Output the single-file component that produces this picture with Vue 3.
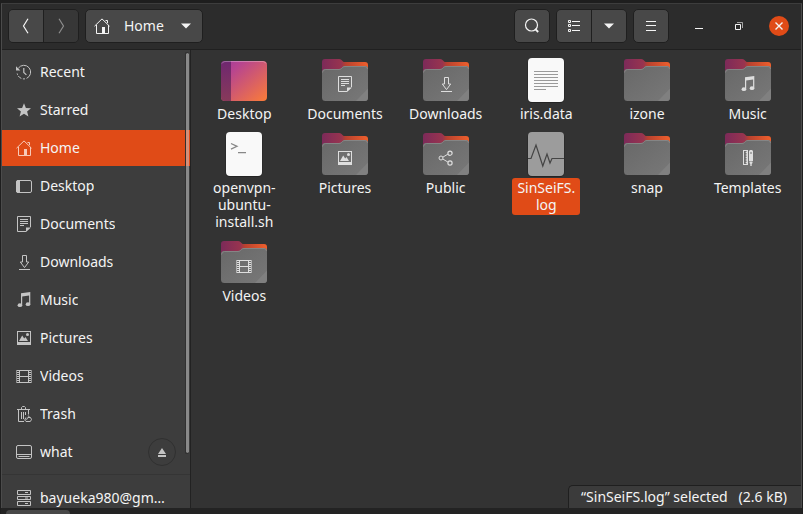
<script setup>
import { ref } from 'vue'

const places = [
  { name: 'Recent', icon: 'recent' },
  { name: 'Starred', icon: 'star' },
  { name: 'Home', icon: 'home' },
  { name: 'Desktop', icon: 'desktop' },
  { name: 'Documents', icon: 'document' },
  { name: 'Downloads', icon: 'download' },
  { name: 'Music', icon: 'music' },
  { name: 'Pictures', icon: 'picture' },
  { name: 'Videos', icon: 'video' },
  { name: 'Trash', icon: 'trash' },
  { name: 'what', icon: 'drive', ejectable: true },
]
const mounts = [{ name: 'bayueka980@gm…', icon: 'server' }]

// A zero-width space marks where a long name may break.
const files = [
  { name: 'Desktop', kind: 'desktop' },
  { name: 'Documents', kind: 'folder', icon: 'document' },
  { name: 'Downloads', kind: 'folder', icon: 'download' },
  { name: 'iris.data', kind: 'text' },
  { name: 'izone', kind: 'folder' },
  { name: 'Music', kind: 'folder', icon: 'music' },
  { name: 'openvpn-ubuntu-install.sh', kind: 'script' },
  { name: 'Pictures', kind: 'folder', icon: 'picture' },
  { name: 'Public', kind: 'folder', icon: 'share' },
  { name: 'SinSeiFS.\u200blog', kind: 'log' },
  { name: 'snap', kind: 'folder' },
  { name: 'Templates', kind: 'folder', icon: 'template' },
  { name: 'Videos', kind: 'folder', icon: 'video' },
]

const place = ref('Home')
const selected = ref('SinSeiFS.\u200blog')
</script>

<template>
  <div class="screen">
    <svg class="defs" width="0" height="0" aria-hidden="true">
      <defs>
        <linearGradient id="back" x1="0" y1="0" x2="1" y2="0">
          <stop offset="0" stop-color="#7c2a59" /><stop offset=".42" stop-color="#98344f" />
          <stop offset=".52" stop-color="#b8412f" /><stop offset="1" stop-color="#f0602c" />
        </linearGradient>
        <linearGradient id="front" x1="0" y1="0" x2="1" y2="1">
          <stop offset="0" stop-color="#686868" /><stop offset="1" stop-color="#787878" />
        </linearGradient>
        <linearGradient id="wall" x1="0" y1="0" x2="1" y2="1">
          <stop offset="0" stop-color="#a23a9c" /><stop offset=".25" stop-color="#b8458f" />
          <stop offset="1" stop-color="#fb7c38" />
        </linearGradient>
        <linearGradient id="dock" x1="0" y1="0" x2="0" y2="1">
          <stop offset="0" stop-color="#6f2770" /><stop offset="1" stop-color="#873a5a" />
        </linearGradient>
      </defs>
      <symbol id="recent" viewBox="0 0 16 16">
        <path d="M2.300 4.200A6.800 6.800 0 1 1 1.200 9.500" fill="none" stroke="currentColor" stroke-dasharray="25 1.600 2 1.600 4 1" />
        <path d="M0 2.200v4.300h4.300zM7.200 4h1.200v4.300l2.400 2.200-.8.8-2.800-2.600z" fill="currentColor" />
      </symbol>
      <symbol id="star" viewBox="0 0 16 16">
        <path d="M8 1.200l1.900 4.700 5.100.3-3.900 3.300 1.300 5L8 11.800l-4.400 2.700 1.300-5L1 6.200l5.100-.3z" fill="currentColor" />
      </symbol>
      <symbol id="home" viewBox="0 0 16 16">
        <path d="M.5 8.200L8 .9l7.500 7.300M2.500 7v8.500h12V7M11.500 2.500h2v2.600" fill="none" stroke="currentColor" />
        <path d="M8 9h3v6.500H8z" fill="currentColor" />
      </symbol>
      <symbol id="desktop" viewBox="0 0 16 16">
        <rect x=".5" y="2.500" width="15" height="12" rx="1.500" fill="none" stroke="currentColor" />
        <path d="M1.500 2H4v13H1.500L0 13.500v-10z" fill="currentColor" />
      </symbol>
      <symbol id="document" viewBox="0 0 16 16">
        <path d="M10 15.500H1.500V.5h13V11" fill="none" stroke="currentColor" />
        <path d="M10 16v-4.500h5zM4 3h8v1H4zM4 5h8v1H4zM4 7h8v1H4zM4 9h4v1H4z" fill="currentColor" />
      </symbol>
      <symbol id="download" viewBox="0 0 16 16">
        <path d="M6.500 1.500h4V8h2.200L8.500 13.600 4.300 8h2.200zM3 15.500h11" fill="none" stroke="currentColor" />
      </symbol>
      <symbol id="music" viewBox="0 0 16 16">
        <path d="M5 1.200L14.300 0v12.300h-1.200V3.600L6.200 4.400v9H5z" fill="currentColor" />
        <ellipse cx="3.900" cy="13.200" rx="2.300" ry="1.900" fill="currentColor" />
        <ellipse cx="12" cy="12.200" rx="2.300" ry="1.900" fill="currentColor" />
      </symbol>
      <symbol id="picture" viewBox="0 0 16 16">
        <path d="M1 1h14v14H1zM2 2v10h12V2z" fill="currentColor" fill-rule="evenodd" />
        <path d="M3 11l3.200-5.500 2 3 1.300-1.500L12 11z" fill="currentColor" />
        <circle cx="11.500" cy="4.500" r="1.500" fill="currentColor" />
      </symbol>
      <symbol id="video" viewBox="0 0 16 16">
        <path d="M4 2.500h8M4 8.500h8M4 14.500h8M3.500 2v13M12.500 2v13" fill="none" stroke="currentColor" />
        <path d="M2 2v13M14 2v13" fill="none" stroke="currentColor" stroke-width="2" stroke-dasharray="1 1" />
        <path d="M.5 2v13M15.500 2v13" fill="none" stroke="currentColor" stroke-opacity=".6" />
      </symbol>
      <symbol id="trash" viewBox="0 0 16 16">
        <path d="M1 3.500h13M5.500 3V1.500l1-1h2l1 1V3M2.500 4v11.500H8M12.500 4v4.500M5.500 6v7M7.500 6v7M9.500 6v3" fill="none" stroke="currentColor" />
        <path d="M12.300 9.500l1.200 2M9.800 11.500L8.800 14l1.200 1.500h4.300l1.200-2-1-2h-2.700l-1.300 2.300" fill="none" stroke="currentColor" />
      </symbol>
      <symbol id="drive" viewBox="0 0 16 16">
        <rect x=".5" y="1.500" width="15" height="13" rx="1.500" fill="none" stroke="currentColor" />
        <path d="M1 10.500h14M2.500 12.500h11" fill="none" stroke="currentColor" />
      </symbol>
      <symbol id="server" viewBox="0 0 16 16">
        <path d="M1.500.5h13v4h-13zM1.500 6.500h13v3h-13zM1.500 11.500h13v4h-13zM9 2.500h3M9 8h3M9 13.500h3" fill="none" stroke="currentColor" />
      </symbol>
      <symbol id="share" viewBox="0 0 16 16">
        <path d="M4.800 7.200l5-3M4.800 9l5 3" fill="none" stroke="currentColor" />
        <circle cx="3" cy="8" r="2" fill="none" stroke="currentColor" />
        <circle cx="12" cy="3.200" r="2.100" fill="none" stroke="currentColor" stroke-width="1.200" />
        <circle cx="12" cy="13" r="2.100" fill="none" stroke="currentColor" stroke-width="1.200" />
      </symbol>
      <symbol id="template" viewBox="0 0 16 16">
        <path d="M3 0h5v15H3zM4 1v13h2.500v-1H5.700v-1h.8v-1.500H5.700v-1h.8V8H5.700V7h.8V5.500H5.700v-1h.8V3H5.700V2h.8V1z" fill="currentColor" fill-rule="evenodd" />
        <path d="M9 1l1-1h2l1 1v10H9zM10.500 2v2h1V2zM9.500 11.500h3V13l-.8 1v2h-1.400v-2l-.8-1z" fill="currentColor" fill-rule="evenodd" />
      </symbol>
    </svg>

    <main class="window">
      <header class="header">
        <div class="group">
          <button class="btn" aria-label="Back">
            <svg width="16" height="16" viewBox="0 0 16 16"><path d="M10 .8L5.500 8l4.500 7.200" fill="none" stroke="currentColor" stroke-width="1.200" /></svg>
          </button>
          <button class="btn off" aria-label="Forward" disabled>
            <svg width="16" height="16" viewBox="0 0 16 16"><path d="M6 .8L10.500 8 6 15.200" fill="none" stroke="currentColor" stroke-width="1.200" /></svg>
          </button>
        </div>
        <button class="btn single path">
          <svg width="16" height="16"><use href="#home" /></svg>
          <span class="path-name">Home</span>
          <svg width="10" height="6" viewBox="0 0 10 6"><path d="M0 .5h10L5 5.500z" fill="currentColor" /></svg>
        </button>
        <span class="spring"></span>
        <button class="btn single" aria-label="Search">
          <svg width="16" height="16" viewBox="0 0 16 16">
            <circle cx="7.500" cy="7" r="6" fill="none" stroke="currentColor" stroke-width="1.200" />
            <path d="M11.200 11l3 3" stroke="currentColor" stroke-width="1.800" />
          </svg>
        </button>
        <div class="group">
          <button class="btn" aria-label="List view">
            <svg width="12" height="12" viewBox="0 0 12 12">
              <path d="M4 1.500h8M4 5.500h8M4 10.500h8" stroke="currentColor" />
              <path d="M.5.500h2v2h-2zM.5 4.500h2v2h-2zM.5 9.500h2v2h-2z" fill="none" stroke="currentColor" />
            </svg>
          </button>
          <button class="btn" aria-label="View options">
            <svg width="10" height="6" viewBox="0 0 10 6"><path d="M0 .5h10L5 5.500z" fill="currentColor" /></svg>
          </button>
        </div>
        <button class="btn single" aria-label="Menu">
          <svg width="10" height="10" viewBox="0 0 10 10"><path d="M0 .5h10M0 4.500h10M0 9.500h10" stroke="currentColor" /></svg>
        </button>
        <div class="controls">
          <button class="ctl" aria-label="Minimize">
            <svg width="8" height="8" viewBox="0 0 8 8"><path d="M0 6.500h8" stroke="currentColor" /></svg>
          </button>
          <button class="ctl" aria-label="Restore">
            <svg width="8" height="8" viewBox="0 0 8 8">
              <path d="M.5 2.500h5v5h-5z" fill="none" stroke="currentColor" />
              <path d="M2 .5h5.500V6" fill="none" stroke="currentColor" stroke-opacity=".6" />
            </svg>
          </button>
          <button class="ctl close" aria-label="Close">
            <svg width="8" height="8" viewBox="0 0 8 8"><path d="M.5.500l7 7M7.500.5l-7 7" stroke="currentColor" stroke-width="1.400" /></svg>
          </button>
        </div>
      </header>

      <div class="body">
        <aside class="sidebar">
          <nav class="list">
            <div v-for="p in places" :key="p.name" class="row" :class="{ active: p.name === place }">
              <a href="#" class="link" @click.prevent="place = p.name">
                <svg width="16" height="16"><use :href="'#' + p.icon" /></svg>
                <span class="name">{{ p.name }}</span>
              </a>
              <button v-if="p.ejectable" class="eject" aria-label="Eject">
                <svg width="8" height="9" viewBox="0 0 8 9"><path d="M4 0l4 6H0zM0 7h8v2H0z" fill="currentColor" /></svg>
              </button>
            </div>
          </nav>
          <nav class="list mounts">
            <div v-for="p in mounts" :key="p.name" class="row">
              <a href="#" class="link" @click.prevent="place = p.name">
                <svg width="16" height="16"><use :href="'#' + p.icon" /></svg>
                <span class="name">{{ p.name }}</span>
              </a>
            </div>
          </nav>
          <span class="thumb"></span>
        </aside>

        <section class="content">
          <div class="grid">
            <button
              v-for="f in files"
              :key="f.name"
              class="file"
              :class="{ picked: f.name === selected }"
              @click="selected = f.name"
            >
              <svg class="art" width="48" height="48" viewBox="0 0 48 48">
                <template v-if="f.kind === 'folder'">
                  <path d="M1 6q0-3 3-3h14q1.500 0 2.500 1l1.500 1.500q.6.5 1.500.5H44q3 0 3 3v12H1z" fill="url(#back)" />
                  <path d="M1 16.500Q1 13 4 13h14q1.500 0 2.500-1l1.200-1.200Q22.500 10 24 10h20q3 0 3 3v28.500q0 3.500-3.500 3.500h-39Q1 45 1 41.500z" fill="url(#front)" />
                  <path d="M1.500 16.500q0-3 3-3H18q1.500 0 2.500-1l1.200-1.200q.8-.8 2.300-.8h20q2.500 0 2.500 2.500" fill="none" stroke="#8b8b8b" stroke-width=".8" />
                  <path d="M47 32.500V41.500q0 3.500-3.500 3.500H35z" fill="#808080" />
                  <use v-if="f.icon" :href="'#' + f.icon" x="16" y="20" width="16" height="16" color="#dedede" />
                </template>
                <template v-else-if="f.kind === 'desktop'">
                  <rect x="1" y="5" width="46" height="40" rx="4" fill="url(#wall)" />
                  <path d="M11 5H5Q1 5 1 9v32q0 4 4 4h6z" fill="url(#dock)" />
                  <path d="M2 7.500q1-2 3-2h38q2 0 3 2" fill="none" stroke="#fff" stroke-opacity=".3" />
                </template>
                <template v-else>
                  <rect x="5.500" y="2.500" width="37" height="44.500" rx="4.500" fill="#242424" />
                  <rect x="6" y="2" width="36" height="44" rx="4" :fill="f.kind === 'log' ? '#9c9c9c' : '#f9f9f9'" />
                  <path v-if="f.kind === 'text'" d="M12 15.500h24M12 18.500h24M12 21.500h24M12 24.500h24M12 27.500h24M12 30.500h24M12 33.500h12" stroke="#9a9a9a" />
                  <path v-else-if="f.kind === 'script'" d="M11 13.500l6 2.800-6 2.900M18 22.700h8" fill="none" stroke="#888" stroke-width="1.300" />
                  <path v-else d="M6 28.500h3L14 15l6.800 21L25 24l3 9 2-4.500h12" fill="none" stroke="#444" stroke-width="1.200" />
                </template>
              </svg>
              <span class="label">{{ f.name }}</span>
            </button>
          </div>
          <output class="status">“SinSeiFS.log” selected&nbsp;&nbsp; (2.6 kB)</output>
        </section>
      </div>
    </main>
    <footer class="shelf"><span class="tab"></span></footer>
  </div>
</template>

<style>
body {
  margin: 0;
  background: #222;
}
</style>

<style scoped>
.screen {
  box-sizing: border-box;
  display: flex;
  flex-direction: column;
  height: 100vh;
  padding: 3px 1px 0;
  overflow: hidden;
  background: #1e1e1e;
  color: #f4f4f4;
  font: 14px/18px "Noto Sans", "Open Sans", sans-serif;
}
.defs {
  position: absolute;
}
button {
  padding: 0;
  border: 0;
  background: none;
  color: inherit;
  font: inherit;
}
svg {
  display: block;
  flex: none;
}
.window {
  display: flex;
  flex: 1;
  flex-direction: column;
  min-height: 0;
  border: 1px solid #4b4b4b;
  border-top-color: #3d3d3d;
  border-bottom: 0;
  background: #333;
}
.header {
  display: flex;
  align-items: center;
  gap: 6px;
  height: 44px;
  padding: 0 12px 1px 6px;
  border-bottom: 1px solid #202020;
  background: #2c2c2c;
}
.group {
  display: flex;
  border: 1px solid #1f1f1f;
  border-radius: 5px;
  overflow: hidden;
}
.btn {
  display: flex;
  align-items: center;
  justify-content: center;
  width: 34px;
  height: 32px;
  background: #484848;
}
.btn + .btn {
  width: 35px;
  border-left: 1px solid #1f1f1f;
}
.btn.off {
  background: #373737;
  color: #8c8c8c;
}
.btn.single {
  box-sizing: content-box;
  border: 1px solid #1f1f1f;
  border-radius: 5px;
}
.btn.path {
  width: auto;
  padding: 0 11px 0 8px;
}
.path-name {
  margin: 0 17px 0 14px;
}
.spring {
  flex: 1;
}
.controls {
  display: flex;
  gap: 20px;
  margin-left: 14px;
}
.ctl {
  display: flex;
  align-items: center;
  justify-content: center;
  width: 20px;
  height: 20px;
  border-radius: 50%;
}
.close {
  background: #e04b17;
}
.body {
  display: flex;
  flex: 1;
  min-height: 0;
}
.sidebar {
  position: relative;
  flex: none;
  width: 188px;
  border-right: 1px solid #222;
  background: #3d3d3d;
  overflow: hidden;
}
.list {
  display: grid;
  grid-template-columns: minmax(0, 1fr);
  gap: 2px;
  padding: 4px 0;
}
.mounts {
  padding-top: 5px;
  border-top: 1px solid #353535;
}
.row {
  display: flex;
  align-items: center;
  height: 36px;
  padding: 0 14px;
  color: #c4c4c4;
}
.link {
  display: flex;
  flex: 1;
  align-items: center;
  gap: 8px;
  min-width: 0;
  color: inherit;
  text-decoration: none;
}
.name {
  overflow: hidden;
  color: #f4f4f4;
  text-overflow: ellipsis;
  white-space: nowrap;
}
.active {
  background: #e04b17;
  color: #f7c9b7;
}
.eject {
  display: flex;
  align-items: center;
  justify-content: center;
  width: 28px;
  height: 28px;
  border: 1px solid #303030;
  border-radius: 50%;
}
.thumb {
  position: absolute;
  top: 2px;
  right: 1px;
  bottom: 54px;
  width: 3px;
  border: 1px solid #303030;
  border-right: 0;
  border-radius: 3px;
  background: rgba(200, 200, 200, .55);
  background-clip: padding-box;
}
.content {
  position: relative;
  flex: 1;
  min-width: 0;
}
.grid {
  display: grid;
  grid-template-columns: repeat(6, 1fr);
  gap: 6px 0;
  padding: 6px 3px;
}
.file {
  display: flex;
  flex-direction: column;
  align-items: center;
}
.label {
  box-sizing: border-box;
  max-width: 88px;
  padding: 1px 4px 2px;
  border-radius: 3px;
  line-height: 17px;
}
.picked .label {
  max-width: 68px;
  background: #e04b17;
}
.status {
  position: absolute;
  right: 0;
  bottom: 0;
  padding: 2px 14px 2px 12px;
  border: solid #1f1f1f;
  border-width: 1px 0 0 1px;
  border-radius: 5px 0 0;
  background: #3b3b3b;
}
.shelf {
  display: flex;
  align-items: flex-end;
  height: 6px;
  padding-left: 5px;
  background: #232323;
}
.tab {
  width: 64px;
  height: 4px;
  border-radius: 4px 4px 0 0;
  background: #484848;
}
</style>
